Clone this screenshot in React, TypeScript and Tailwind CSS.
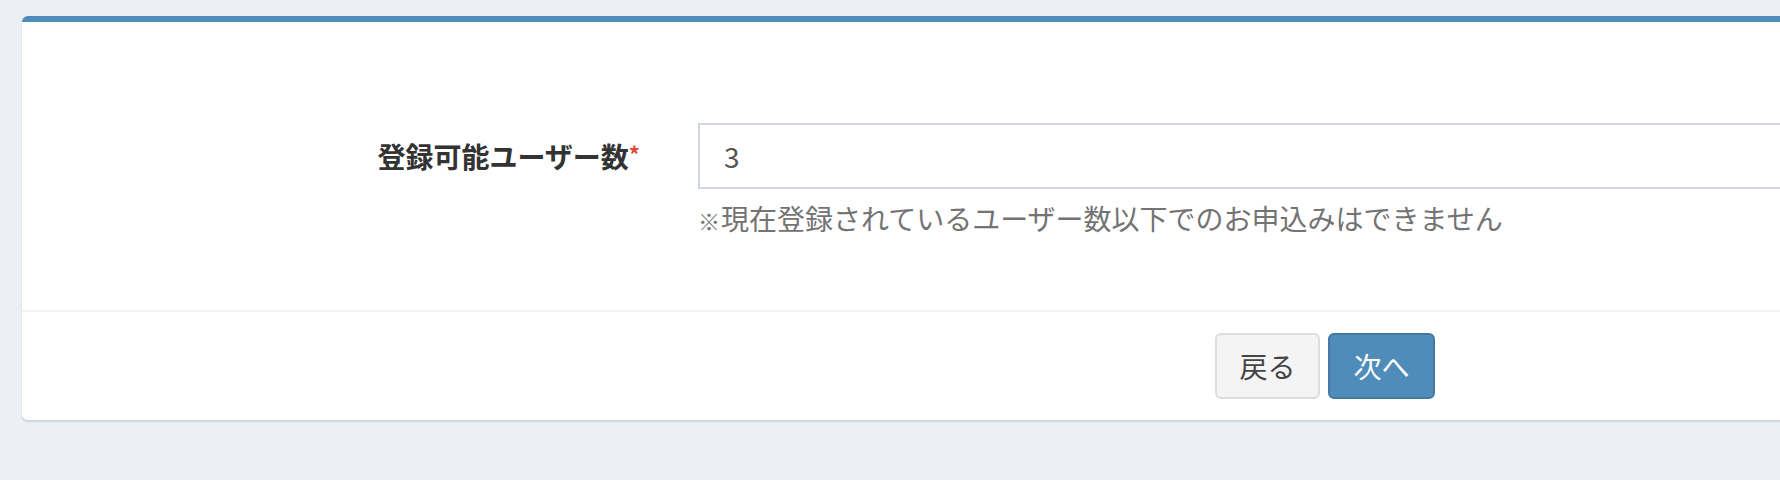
import React from "react";

const font = { fontFamily: '"Noto Sans CJK JP", "Noto Sans", sans-serif' };

export default function App() {
  return (
    <div
      className="w-[1780px] h-[480px] overflow-hidden bg-[#ecf0f5] pt-[16px] pl-[22px]"
      style={font}
    >
      <div className="w-[2606px] bg-white rounded-[6px] border-t-[6px] border-[#4f8cba] shadow-[0_2px_2px_rgba(0,0,0,0.12)]">
        {/* body */}
        <div className="pt-[101px] pb-[72px]">
          <div className="flex">
            <div className="w-[676px] pr-[58px] flex justify-end items-start h-[66px]">
              <label className="flex items-center h-[66px] text-[28px] font-bold text-[#333]">
                登録可能ユーザー数
                <span className="text-[#dd4b39] text-[22px] self-start mt-[14px]">*</span>
              </label>
            </div>
            <div className="flex-1 pr-[30px]">
              <input
                readOnly
                value="3"
                className="w-full h-[66px] border-2 border-[#d2d6de] px-[24px] text-[28px] text-[#555] outline-none"
                style={font}
              />
              <p className="mt-[9px] h-[40px] text-[28px] leading-[40px] text-[#737373]">
                <span className="text-[22px] leading-none mr-[1px]">※</span>現在登録されているユーザー数以下でのお申込みはできません
              </p>
            </div>
          </div>
        </div>
        {/* footer */}
        <div className="border-t-2 border-[#f4f4f4] pt-[21px] pb-[21px] flex justify-center gap-[8px]">
          <button className="h-[66px] w-[105px] rounded-[6px] border-2 border-[#dddddd] bg-[#f4f4f4] text-[28px] text-[#444]">
            戻る
          </button>
          <button className="h-[66px] w-[107px] rounded-[6px] border-2 border-[#4379a5] bg-[#508cb9] text-[28px] text-white">
            次へ
          </button>
        </div>
      </div>
    </div>
  );
}
